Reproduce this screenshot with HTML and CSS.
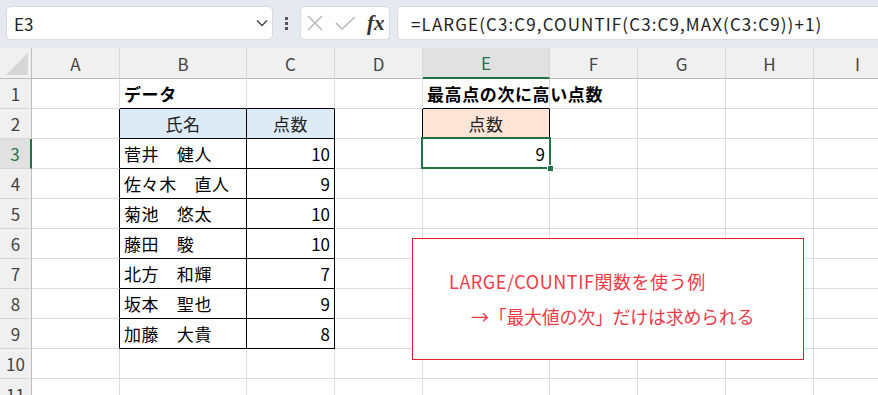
FILE: index.html
```html
<!DOCTYPE html>
<html lang="ja">
<head>
  <meta charset="UTF-8" />
  <meta name="viewport" content="width=device-width, initial-scale=1.0" />
  <title>LARGE/COUNTIF</title>
  <link rel="stylesheet" href="styles.css">
</head>
<body>

  <div class="toolbar">
    <div class="namebox">
      <span>E3</span>
      <svg class="chevron" width="12" height="8" viewBox="0 0 12 8"><polyline points="1,1.5 6,6.5 11,1.5" fill="none" stroke="#444" stroke-width="1.4"/></svg>
    </div>
    <div class="dots"><i></i><i></i><i></i></div>
    <div class="fxbox">
      <svg width="16" height="16" viewBox="0 0 16 16"><path d="M1 1 L15 15 M15 1 L1 15" stroke="#b4b4b4" stroke-width="1.4" fill="none"/></svg>
      <svg width="21" height="14" viewBox="0 0 21 14"><polyline points="1,7 7,13 20,1" fill="none" stroke="#b4b4b4" stroke-width="1.4"/></svg>
      <span class="fx">fx</span>
    </div>
    <div class="formula">=LARGE(C3:C9,COUNTIF(C3:C9,MAX(C3:C9))+1)</div>
  </div>

  <div class="sheet">
    <div class="row head">
      <div class="corner"></div>
      <div class="ch">A</div><div class="ch">B</div><div class="ch">C</div><div class="ch">D</div>
      <div class="ch sel">E</div><div class="ch">F</div><div class="ch">G</div><div class="ch">H</div><div class="ch">I</div>
    </div>

    <div class="row">
      <div class="rh">1</div>
      <div class="c"></div><div class="c kb bold">データ</div><div class="c kb"></div><div class="c"></div>
      <div class="c kb bold">最高点の次に高い点数</div><div class="c"></div><div class="c"></div><div class="c"></div><div class="c"></div>
    </div>
    <div class="row">
      <div class="rh">2</div>
      <div class="c kr"></div><div class="c kr kb blue ctr">氏名</div><div class="c kr kb blue ctr">点数</div><div class="c kr"></div>
      <div class="c kr kb orange ctr">点数</div><div class="c"></div><div class="c"></div><div class="c"></div><div class="c"></div>
    </div>
    <div class="row">
      <div class="rh sel">3</div>
      <div class="c kr"></div><div class="c kr kb">菅井　健人</div><div class="c kr kb num">10</div><div class="c"></div>
      <div class="c num active">9</div><div class="c"></div><div class="c"></div><div class="c"></div><div class="c"></div>
    </div>
    <div class="row">
      <div class="rh">4</div>
      <div class="c kr"></div><div class="c kr kb">佐々木　直人</div><div class="c kr kb num">9</div><div class="c"></div>
      <div class="c"></div><div class="c"></div><div class="c"></div><div class="c"></div><div class="c"></div>
    </div>
    <div class="row">
      <div class="rh">5</div>
      <div class="c kr"></div><div class="c kr kb">菊池　悠太</div><div class="c kr kb num">10</div><div class="c"></div>
      <div class="c"></div><div class="c"></div><div class="c"></div><div class="c"></div><div class="c"></div>
    </div>
    <div class="row">
      <div class="rh">6</div>
      <div class="c kr"></div><div class="c kr kb">藤田　駿</div><div class="c kr kb num">10</div><div class="c"></div>
      <div class="c"></div><div class="c"></div><div class="c"></div><div class="c"></div><div class="c"></div>
    </div>
    <div class="row">
      <div class="rh">7</div>
      <div class="c kr"></div><div class="c kr kb">北方　和輝</div><div class="c kr kb num">7</div><div class="c"></div>
      <div class="c"></div><div class="c"></div><div class="c"></div><div class="c"></div><div class="c"></div>
    </div>
    <div class="row">
      <div class="rh">8</div>
      <div class="c kr"></div><div class="c kr kb">坂本　聖也</div><div class="c kr kb num">9</div><div class="c"></div>
      <div class="c"></div><div class="c"></div><div class="c"></div><div class="c"></div><div class="c"></div>
    </div>
    <div class="row">
      <div class="rh">9</div>
      <div class="c kr"></div><div class="c kr kb">加藤　大貴</div><div class="c kr kb num">8</div><div class="c"></div>
      <div class="c"></div><div class="c"></div><div class="c"></div><div class="c"></div><div class="c"></div>
    </div>
    <div class="row">
      <div class="rh">10</div>
      <div class="c"></div><div class="c"></div><div class="c"></div><div class="c"></div>
      <div class="c"></div><div class="c"></div><div class="c"></div><div class="c"></div><div class="c"></div>
    </div>
    <div class="row last">
      <div class="rh">11</div>
      <div class="c"></div><div class="c"></div><div class="c"></div><div class="c"></div>
      <div class="c"></div><div class="c"></div><div class="c"></div><div class="c"></div><div class="c"></div>
    </div>

    <!-- テキストボックス（図形） -->
    <div class="callout">
      <p class="lead">LARGE/COUNTIF関数を使う例</p>
      <p class="indent">→「最大値の次」だけは求められる</p>
    </div>
  </div>

</body>
</html>
```

FILE: styles.css
```css
body {
  margin: 0;
  width: 878px;
  height: 395px;
  overflow: hidden;
  background: #fff;
  font-family: "Noto Sans CJK JP", sans-serif;
  color: #000;
}

/* 数式バー */
.toolbar {
  height: 48px;
  box-sizing: border-box;
  padding: 6px 0 8px 6px;
  background: #e6e9f0;
  display: flex;
}
.namebox {
  width: 267px;
  box-sizing: border-box;
  background: #fff;
  border: 1px solid #d8dbe2;
  border-radius: 5px;
  display: flex;
  align-items: center;
  justify-content: space-between;
  padding: 0 4px 0 7px;
  font-size: 17px;
  color: #222;
}
.dots {
  width: 27px;
  display: flex;
  flex-direction: column;
  align-items: center;
  justify-content: center;
  gap: 2px;
}
.dots i {
  width: 3px;
  height: 3px;
  background: #555;
}
.fxbox {
  width: 90px;
  box-sizing: border-box;
  background: #fff;
  border: 1px solid #d8dbe2;
  border-radius: 5px;
  display: flex;
  align-items: center;
  padding: 0 4px 0 6px;
  gap: 12px;
}
.fx {
  font-family: "Liberation Serif", serif;
  font-style: italic;
  font-weight: bold;
  font-size: 21px;
  color: #333;
  margin-left: -1px;
}
.formula {
  flex: 1;
  margin-left: 7px;
  background: #fff;
  border: 1px solid #d8dbe2;
  border-right: none;
  border-radius: 5px 0 0 5px;
  display: flex;
  align-items: center;
  padding-left: 13px;
  font-size: 17px;
  letter-spacing: 1.1px;
  color: #222;
  white-space: nowrap;
}

/* シート */
.sheet {
  position: relative;
}
.row {
  display: grid;
  grid-template-columns: 32px 88px 127px 88px 88px 127px 88px 88px 88px 88px;
  height: 30px;
}
.row > div {
  box-sizing: border-box;
}
.head {
  height: 31px;
}
.last {
  height: 17px;
  overflow: hidden;
}
.last .rh {
  align-items: flex-start;
  padding-top: 3px;
}
.corner, .ch, .rh {
  background: #f0f0f0;
  color: #444;
  font-size: 17px;
  display: flex;
  align-items: center;
  justify-content: center;
}
.corner {
  position: relative;
  border-right: 1px solid #bdbdbd;
  border-bottom: 1px solid #bdbdbd;
}
.corner::after {
  content: "";
  position: absolute;
  right: 3px;
  bottom: 3px;
  border-left: 22px solid transparent;
  border-bottom: 22px solid #d6d6d6;
}
.ch {
  border-right: 1px solid #d7d7d7;
  border-bottom: 1px solid #bdbdbd;
}
.rh {
  border-right: 1px solid #bdbdbd;
  border-bottom: 1px solid #d7d7d7;
}
.ch.sel {
  background: #e1e1e1;
  color: #217346;
  border-bottom: 2px solid #217346;
}
.rh.sel {
  background: #e1e1e1;
  color: #217346;
  border-right: 2px solid #217346;
}

.c {
  border-right: 1px solid #dcdcdc;
  border-bottom: 1px solid #dcdcdc;
  font-size: 17px;
  letter-spacing: 0.6px;
  padding: 0 4px;
  display: flex;
  align-items: center;
  white-space: nowrap;
}
.bold {
  font-weight: bold;
}
.num {
  justify-content: flex-end;
  letter-spacing: 0;
}
.ctr {
  justify-content: center;
  color: #222;
}
.kr {
  border-right-color: #000;
}
.kb {
  border-bottom-color: #000;
}
.blue {
  background: #ddebf7;
}
.orange {
  background: #fce4d6;
}

/* 選択中のセル */
.active {
  position: relative;
}
.active::before {
  content: "";
  position: absolute;
  top: -2px;
  left: -2px;
  right: -2px;
  bottom: -1px;
  border: 2px solid #217346;
}
.active::after {
  content: "";
  position: absolute;
  right: -5px;
  bottom: -4px;
  width: 5px;
  height: 5px;
  background: #217346;
  border: 1px solid #fff;
}

.callout {
  position: absolute;
  left: 412px;
  top: 190px;
  width: 392px;
  height: 122px;
  box-sizing: border-box;
  border: 1px solid #e3202c;
  background: #fff;
  padding: 25px 0 0 36px;
  color: #ee3b48;
  font-size: 18px;
}
.callout p {
  margin: 0;
  line-height: 35px;
}
.callout .lead {
  letter-spacing: 0.55px;
}
.callout .indent {
  padding-left: 22px;
  letter-spacing: -0.3px;
}
```
